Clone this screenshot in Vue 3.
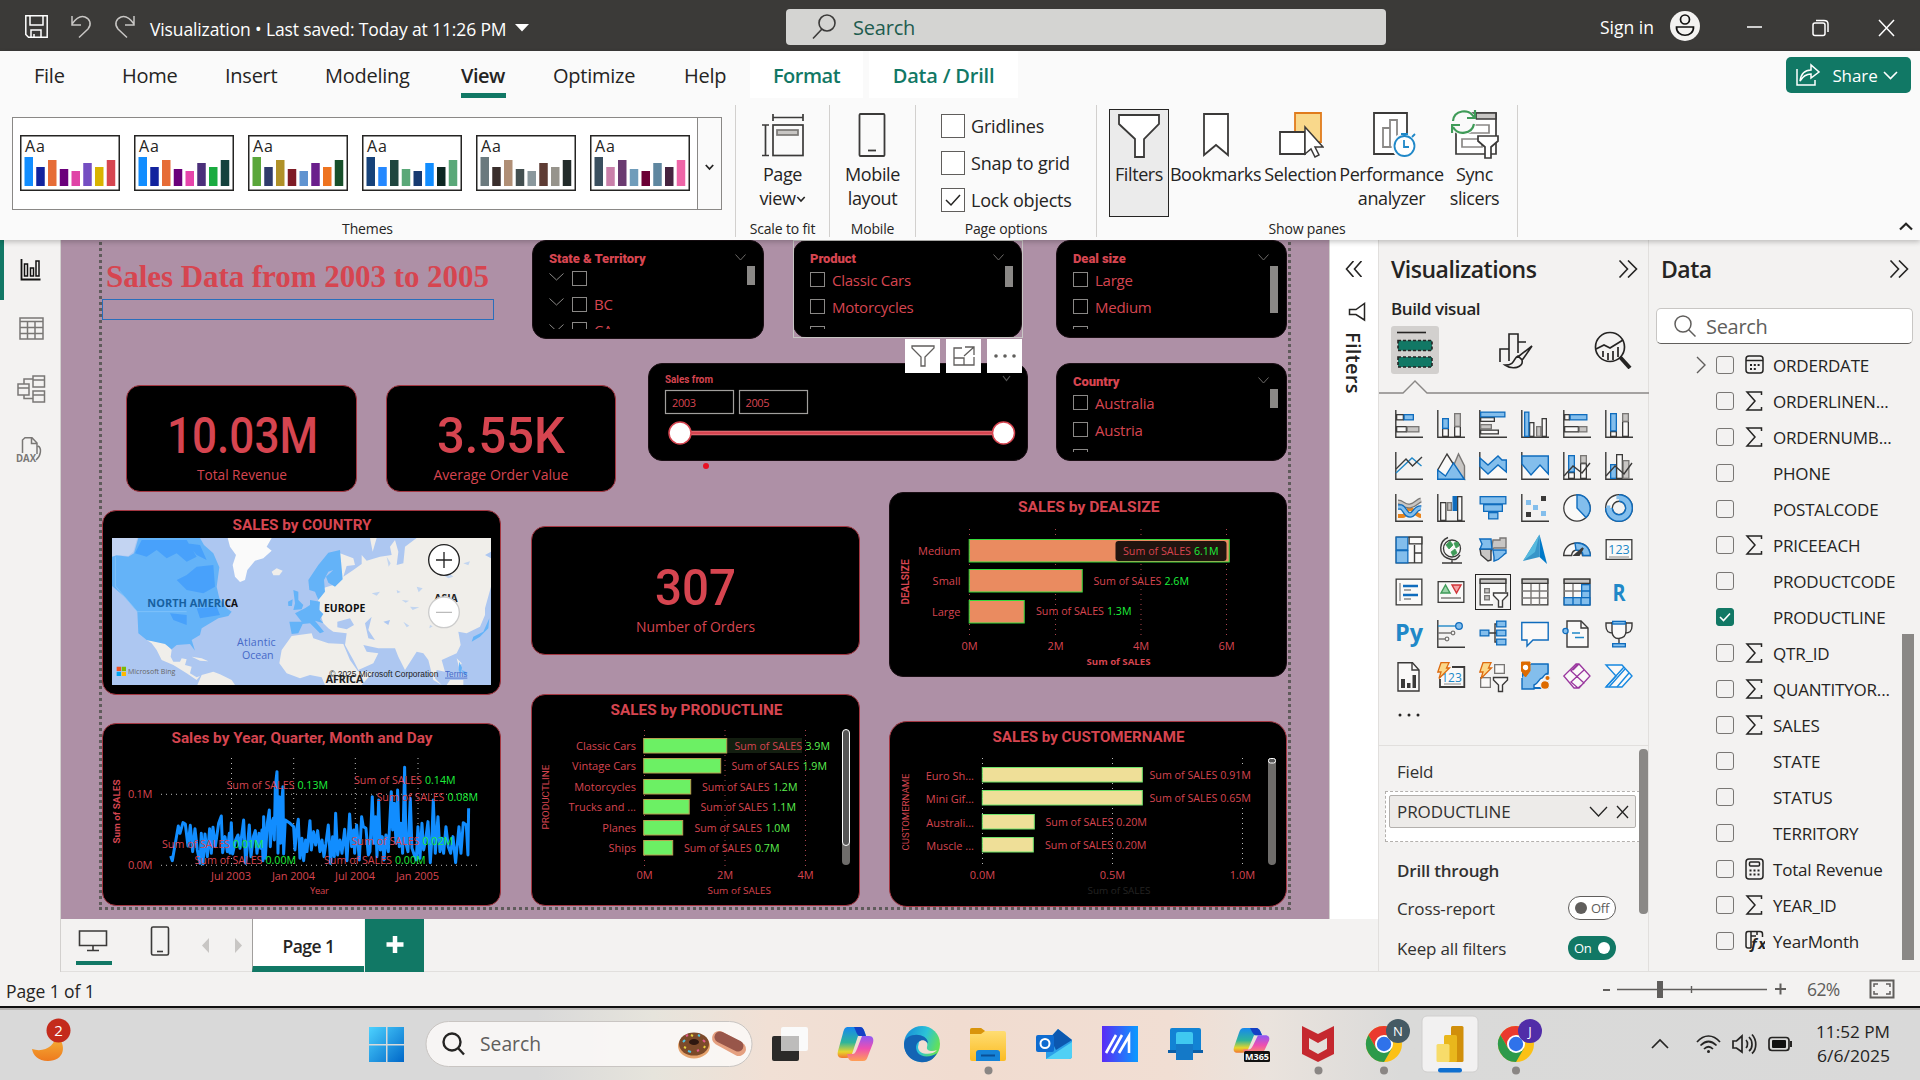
<script setup>
const D = '#3b3a39'
const B = '#83beec'
const BS = '#0f6cbd'
const G = '#c8c6c4'
const GS = '#797775'
const W = '#faf9f8'

const r = (x, y, w, h, f = W, s = D, sw = 1.3) =>
  `<rect x="${x + sw / 2}" y="${y + sw / 2}" width="${w - sw}" height="${h - sw}" fill="${f}" stroke="${s}" stroke-width="${sw}"/>`
const p = (d, s = D, f = 'none', sw = 1.4) =>
  `<path d="${d}" fill="${f}" stroke="${s}" stroke-width="${sw}"/>`
const c = (x, y, rad, f = W, s = D, sw = 1.3) =>
  `<circle cx="${x}" cy="${y}" r="${rad}" fill="${f}" stroke="${s}" stroke-width="${sw}"/>`
const axis = p('M.8 0V27.2H28')
const bolt = p('M4 .7H12L9.5 6H12.5L2 16.5L4 10H.8Z', '#dd6b10', '#fbd889', 1.3)
const funnel = (x, y) => p(`M${x} ${y}h14v2.500l-5 5v6.500h-4v-6.500l-5-5z`, D, W)

const visualIcons = [
  axis + r(1, 4, 8, 6.500) + r(8.500, 4, 10.500, 6.500, B, BS) + r(1, 16, 11, 6.500) + r(11.500, 16, 13, 6.500, G, GS),
  axis + r(5, 18, 7, 9) + r(5, 8, 7, 11, B, BS) + r(17, 16, 7, 11) + r(17, 3, 7, 14, G, GS),
  axis + r(1, 7, 15, 5) + r(1, 1.500, 25.500, 6, B, BS) + r(1, 14, 12, 5.500, G, GS) + r(1, 19.500, 19, 5),
  axis + r(8, 12, 5.500, 15) + r(3, 1.500, 5.500, 25.500, B, BS) + r(15, 16, 5.500, 11, G, GS) + r(20.500, 8, 5.500, 19),
  axis + r(1, 4, 6, 6.500) + r(6.500, 4, 18, 6.500, B, BS) + r(1, 16, 15, 6.500) + r(15.500, 16, 9, 6.500, G, GS),
  axis + r(5, 21, 7, 6) + r(5, 3, 7, 18.500, B, BS) + r(17, 11, 7, 16) + r(17, 3, 7, 9, G, GS),
  axis + p('M1 21L17 6L26.500 14', '#2088c8') + p('M1 17L11 7L17.500 14L27 5'),
  p('M16 15L21.500 2L27.500 14V27Z', GS, G) + p('M.7 18L10 2L17 13L9 25L.7 20Z', D, W) + p('M.7 18L8.500 24L16.500 11L27.300 27.300H.7Z', BS, B),
  p('M1 27V14L10 22L19 13L27 21V27Z', W, W) + axis + p('M1 6L9 13L19 4L23 8H27.300V20L19 13L9 22L1 14.500Z', BS, B),
  p('M1 27V12L10 23L19 13L27 22V27Z', W, W) + axis + p('M1 4H27.300V22L19 13L10 23L1 12Z', BS, B),
  axis + r(5, 20, 7, 7) + r(5, 3, 7, 17.500, B, BS) + r(17, 11, 7, 16) + r(17, 3, 7, 8.500, G, GS) + p('M1 24L10 14L19 21L27 11'),
  axis + r(5, 12, 7, 15, B, BS) + r(11, 2, 7, 25) + r(17.500, 8, 7, 19, G, GS) + p('M1 24L10 14L19 22L27 11'),
  axis + p('M3 22H8C11 22 11 15 15 15S21 22 26 22', '#e8851e', 'none', 4) + p('M3 8C8 8 9 13 15 12S22 7 26 6', GS, 'none', 5) + p('M3 8C8 8 9 13 15 12S22 7 26 6', G, 'none', 2.500) + p('M3 13H6C10 14 10 21 15 21S20 13 26 14', BS, 'none', 5.500) + p('M3 13H6C10 14 10 21 15 21S20 13 26 14', B, 'none', 3),
  axis + r(3, 8, 6.500, 19) + r(10, 8, 5, 9, G, GS) + r(15.500, 2, 5, 15, BS, BS) + r(20, 2, 5.500, 25),
  r(.5, 2, 27, 8.500, B, BS) + r(4, 10, 20, 8, B, BS) + r(9, 18, 10.500, 7.500, B, BS),
  axis + r(5, 6, 5, 5, B, B) + r(12, 11, 5, 5, B, B) + r(20, 17, 5, 5, B, B) + r(20, 2, 5, 5, D) + r(5, 18, 5, 5, D),
  c(14, 14, 13.200) + p('M14 .8A13.200 13.200 0 0 1 23 23.500L14 14Z', BS, B),
  c(14, 14, 10, 'none', D, 8) + c(14, 14, 10, 'none', W, 5.200) + p('M14 4A10 10 0 1 1 4 14', BS, 'none', 8) + p('M14 5.300V4A10 10 0 1 1 4 14H5.300', B, 'none', 5.200),
  r(.5, .5, 27, 27) + r(.5, .5, 13, 14, B, BS) + r(.5, 14, 13, 13.500, B, BS) + r(13.500, .5, 14, 8) + p('M19.500 9V27M19.500 17H27'),
  c(15, 12.500, 8.500, W, D) + p('M9 9L13 5L16 9L12 13ZM17 7L21 6L22 10L19 12ZM14 16L18 13L20 17L16 20Z', '#3f9b58', '#3f9b58', .8) + p('M11 1.500C2 5 1 18 10 22S21 22 23 19M15 23.500V27M5 27H25'),
  p('M14 4H21V2H27V12H15L12 15Z', GS, G) + p('M1 13H12V24L9 25L2 19Z', D, G) + p('M.8 3H12L13 13H1L3 8Z', BS, B) + p('M14 14H27V17C23 19 23 23 15 25V21Z', BS, B),
  '<path d="M18.500-1.500V21L2 25Z" fill="#3795c8"/><path d="M18.500-1.500L26 28L18.500 21Z" fill="#0079c8"/><path d="M18.500-1.500L2 25L14 16Z" fill="#55b9de"/>',
  p('M.7 19.500C1 12 6 7 14 7S27 12 27.300 19.500H19.500C19 16 17 14 14 14S9 16 8.500 19.500Z', D, W) + p('M12 7.200C21 6 27 12 27.300 19.500H20C20 16 18 14 13 14Z', BS, B) + p('M12 19L20 12L16 19Z', D, D, 2),
  r(.5, 3, 27, 21) + '<text x="14" y="17.500" font-size="12.500" text-anchor="middle" fill="#2088c8">123</text>' + p('M4 21H24', '#8a8886', 'none', 1),
  r(.5, .5, 27, 27) + p('M5 5V23M9 12H16M9 21H16', '#8a8886', 'none', 1.300) + p('M8 8H23M8 17H23', BS, 'none', 2.400),
  r(.5, 3, 27, 22) + p('M4 15L8.500 7L13 15Z', '#3f9b58', '#9bd3a8') + p('M15 7H24L19.500 15Z', '#d13438', '#f4a3a6') + p('M4 20H24', GS),
  r(.5, .5, 27, 27) + r(.5, .5, 27, 5.500, G) + r(5, 10, 6, 5.500, G, GS) + r(5, 17, 6, 5.500, G, GS) + '<path d="M14 14H30V30H14Z" fill="#f3f2f1"/>' + funnel(14.500, 15),
  r(.5, .5, 27, 27) + r(.5, .5, 27, 5.500, G) + p('M1 13H27M1 20H27M10 6V27M18.500 6V27', GS),
  r(.5, .5, 27, 27) + r(.5, .5, 27, 5.500, G) + r(18, 6, 9.500, 21.500, B, BS) + r(.5, 19, 27, 8.500, B, BS) + p('M1 13H18M10 6V19', GS) + p('M18 13H27M10 19V27M18 19V27', BS),
  '<text x="14" y="23" font-size="23" font-weight="700" text-anchor="middle" textLength="13" lengthAdjust="spacingAndGlyphs" fill="#2088c8">R</text>',
  '<text x="14" y="21" font-size="24" font-weight="700" text-anchor="middle" textLength="28" lengthAdjust="spacingAndGlyphs" fill="#2088c8">Py</text>',
  axis + p('M1 6H20', '#2088c8') + c(22, 6, 3.300, B, BS) + p('M1 13H15M1 19H9', GS) + c(16, 13, 1.800, W, GS) + c(10, 19, 1.800, W, GS),
  p('M10 13H17M20 4H16V22H20') + r(.5, 9.500, 10, 7, B, BS) + r(17, .5, 10.500, 7, B, BS) + r(17, 9.500, 10.500, 7, B, BS) + r(17, 18.500, 10.500, 7, B, BS),
  p('M.8 2.500H27.200V20H12L6 26V20H.8Z', BS, W),
  p('M4 1H18L25 8V27H4Z', D, W) + p('M18 1V8H25') + p('M9 13H17M12 17.500H21', '#2088c8', 'none', 1.300) + c(2.500, 11, 2.600, B, BS),
  p('M7 3H1V6C1 12 4 13 8 13M21 3H27V6C27 12 24 13 20 13') + p('M7 3H21V11C21 16 18 18 14 18.500S7 16 7 11ZM14 18V24', D, W) + r(7, .7, 14, 4, B, BS) + r(7, 23, 14, 4.500, B, BS),
  p('M3 .8H17.500L24 8V29H3Z', D, W) + p('M17 1V8H24') + '<path d="M6 17H10V26H6ZM12 21H15.500V26H12ZM17.500 13H21V26H17.500Z" fill="#3b3a39"/>',
  p('M15 5H27.300V25H3V17', D, W, 1.800) + '<text x="14.500" y="19.500" font-size="12" text-anchor="middle" fill="#2088c8">123</text>' + p('M7 22H24', '#8a8886', 'none', 1) + bolt,
  r(15, 2, 11, 10, W, GS) + r(1, 15, 11, 11, W, GS) + bolt + funnel(14.500, 15.500),
  r(1, 2, 26.500, 25, W, BS, 2) + p('M10 2H27V11C24 12 23 14 21 16C18 16 18 21 13 23V27H1V16', BS, B) + c(24, 23, 4.500, '#dd6b00', '#f3f2f1') + c(26.500, 16, 2.700, '#dd6b00', '#f3f2f1') + p('M.5 0H9V9L4.500 15L.5 9Z', '#dd6b00', '#dd6b00', 1) + c(4.500, 5.500, 2, '#fff', '#fff'),
  p('M13 2L.8 14L11 26H16L27 14L16 2ZM15 2L8 9L21 21L15 26M21 8L8 20L15 26M16 2L10 8', '#9a379f', W, 1.300),
  p('M1 3H17L27 14L17 25H1L11 14Z', '#1788e0', W) + p('M20 7L4 25M24 11L12 25M1 25L19 5', '#1788e0'),
]

const themes = [
  ['#118dff', '#12239e', '#e66c37', '#6b007b', '#e044a7', '#744ec2', '#d9b300', '#d64550'],
  ['#118dff', '#12239e', '#e66c37', '#6b007b', '#e645ab', '#4b2f7a', '#1aab40', '#15423d'],
  ['#5aa63a', '#2f3b6b', '#b09128', '#7e1b25', '#5f93d0', '#6a1f8c', '#ee7420', '#174f2a'],
  ['#16427a', '#2488ff', '#1f463f', '#5aa878', '#163a70', '#118dff', '#0c2622', '#5aa878'],
  ['#6b7a7e', '#3a2e2c', '#b08f76', '#434f50', '#8a989d', '#5e3c34', '#97948c', '#222b2a'],
  ['#3a4f5f', '#c980aa', '#6a3a70', '#6f9cba', '#6b0035', '#5f87a0', '#46233f', '#ee65a7'],
]
const themeHeights = [29, 19, 26, 17, 15, 23, 19, 26]

const tabs = [
  ['File', 34, 31], ['Home', 57, 56], ['Insert', 47, 52], ['Modeling', 48, 88], ['View', 48, 45], ['Optimize', 47, 84], ['Help', 47, 43],
]

const slicers = [
  { title: 'State & Territory', x: 532, y: 240, w: 232, h: 99, rows: ['', 'BC', 'CA'], tree: true, thumb: 19 },
  { title: 'Product', x: 793, y: 240, w: 229, h: 98, rows: ['Classic Cars', 'Motorcycles', ''], thumb: 21 },
  { title: 'Deal size', x: 1056, y: 240, w: 231, h: 98, rows: ['Large', 'Medium', ''], thumb: 47 },
  { title: 'Country', x: 1056, y: 363, w: 231, h: 98, rows: ['Australia', 'Austria', ''], thumb: 19 },
]
const place = (x, y, w, h) => ({ left: `${x - 61}px`, top: `${y - 240}px`, width: `${w}px`, height: `${h}px` })

const dealBars = [
  { n: 'Medium', y: 539, w: 261, v: '6.1M', ty: 551, tx: 1123 },
  { n: 'Small', y: 569, w: 114, v: '2.6M', ty: 581, tx: 1093.500 },
  { n: 'Large', y: 600, w: 56, v: '1.3M', ty: 611, tx: 1036 },
]
const productBars = [
  { n: 'Classic Cars', y: 738, w: 84, v: '3.9M', tx: 734.500 },
  { n: 'Vintage Cars', y: 758, w: 78, v: '1.9M', tx: 731.500 },
  { n: 'Motorcycles', y: 779, w: 48, v: '1.2M', tx: 702 },
  { n: 'Trucks and ...', y: 799, w: 46.500, v: '1.1M', tx: 700.500 },
  { n: 'Planes', y: 820, w: 40, v: '1.0M', tx: 694.500 },
  { n: 'Ships', y: 840, w: 30, v: '0.7M', tx: 684 },
]
const customerBars = [
  { n: 'Euro Sh...', y: 767, w: 161, v: '0.91M', tx: 1149.500 },
  { n: 'Mini Gif...', y: 790, w: 161, v: '0.65M', tx: 1149.500 },
  { n: 'Australi...', y: 814, w: 53, v: '0.20M', tx: 1045.500 },
  { n: 'Muscle ...', y: 837, w: 52, v: '0.20M', tx: 1045 },
]
const linePoints = '512,1098 517,1112 535,1008 540,1030 549,998 556,1002 564,1068 571,1006 578,1085 585,1016 592,1080 600,1120 604,1030 609,1122 615,1032 622,1100 629,1016 634,1090 639,1012 646,1070 656,1000 664,978 668,1088 675,1040 682,1085 688,1030 690,1090 694,998 698,1092 707,1050 714,1035 720,1075 726,1030 731,990 737,1120 743,1060 748,1005 753,1100 760,1040 766,1022 771,1090 777,1030 782,1075 786,1020 789,1112 791,980 796,1105 802,1000 808,960 811,1070 815,1000 820,985 823,1050 826,890 831,845 834,1090 838,920 842,1060 845,940 849,890 851,1092 856,990 868,998 881,1010 885,1080 890,1020 895,988 900,1105 906,1045 911,1112 917,1050 921,1085 930,992 934,1080 941,1025 947,1065 953,1022 960,1085 966,1050 972,1100 978,1060 985,1005 992,1120 998,1040 1003,1100 1007,970 1013,1095 1020,1050 1026,1090 1034,1018 1041,1112 1049,972 1055,1070 1061,1020 1064,1090 1070,1005 1078,1110 1085,980 1090,1010 1098,1015 1105,1095 1110,1085 1117,920 1122,1060 1127,980 1131,1100 1136,930 1141,1080 1147,1040 1152,1110 1158,1035 1165,1085 1174,905 1178,1020 1183,940 1188,1060 1193,900 1198,1070 1203,1000 1208,1090 1214,832 1218,1060 1224,1085 1231,925 1236,1075 1243,1095 1249,1110 1254,1010 1260,1105 1266,1000 1271,1080 1277,1050 1284,995 1291,1118 1296,1040 1300,930 1306,1090 1314,980 1320,1085 1326,1045 1331,1090 1338,1010 1345,1070 1352,1090 1359,1040 1367,1118 1377,1010 1383,1090 1390,998 1399,1005 1404,1095 1406,955'
const lineLabels = [
  [226.500, 785, '0.13M'], [354, 780, '0.14M'], [376.500, 797, '0.08M'],
  [162, 844, '0.01M'], [351.500, 841, '0.02M'], [194.500, 860, '0.00M'], [324, 860, '0.00M'],
]

const fields = [
  ['ORDERDATE', 'date'], ['ORDERLINEN...', 'sum'], ['ORDERNUMB...', 'sum'], ['PHONE', ''], ['POSTALCODE', ''],
  ['PRICEEACH', 'sum'], ['PRODUCTCODE', ''], ['PRODUCTLINE', '', true], ['QTR_ID', 'sum'], ['QUANTITYOR...', 'sum'],
  ['SALES', 'sum'], ['STATE', ''], ['STATUS', ''], ['TERRITORY', ''], ['Total Revenue', 'calc'], ['YEAR_ID', 'sum'], ['YearMonth', 'fx'],
]
</script>

<template>
  <div class="app">
    <header class="titlebar">
      <svg class="quick" width="120" height="30" viewBox="20 11 120 30" fill="none" stroke="#fff" stroke-width="1.500">
        <path d="M25.800 15.800H47.200V37.200H28.500L25.800 34.500ZM30 16V25H43V16M31 37V30H41V37M34 34V37" />
        <path d="M72 16V25H81M72 24C77 17 81 15.500 85 17C90 19 92 24 88 29L79 37.500" stroke="#c8c6c4" />
        <path d="M134 16V25H125M134 24C129 17 125 15.500 121 17C116 19 114 24 118 29L127 37.500" stroke="#c8c6c4" />
      </svg>
      <span class="doc">Visualization • Last saved: Today at 11:26 PM</span>
      <svg class="caret" width="14" height="8" viewBox="0 0 14 8"><path d="M0 0H14L7 7.500Z" fill="#fff" /></svg>
      <div class="topsearch">
        <svg width="24" height="26" viewBox="0 0 24 26" fill="none" stroke="#3b3a39" stroke-width="1.600"><circle cx="15" cy="9" r="8" /><path d="M10 15L1 24.500" /></svg>
        <span>Search</span>
      </div>
      <span class="signin">Sign in</span>
      <svg class="avatar" width="30" height="30" viewBox="0 0 30 30"><circle cx="15" cy="15" r="15" fill="#f3f2f1" /><g fill="none" stroke="#111" stroke-width="1.700"><circle cx="15" cy="8.500" r="4.500" /><path d="M6.500 16H23.500C24 27 6 27 6.500 16Z" /></g></svg>
      <svg class="winbtns" width="150" height="20" viewBox="0 0 150 20" fill="none" stroke="#fff" stroke-width="1.500">
        <path d="M1 9H16M133 2L148 18M148 2L133 18" />
        <rect x="67" y="5" width="12" height="12.500" rx="2" /><path d="M70 2.500H78C81 2.500 82 4 82 6V14" />
      </svg>
    </header>

    <div class="ribbon">
      <nav class="tabs">
        <span v-for="t in tabs" :key="t[0]" class="tab" :class="{ active: t[0] === 'View' }" :style="{ marginLeft: t[1] + 'px', width: t[2] + 'px' }">{{ t[0] }}</span>
        <span class="ctx format">Format</span>
        <span class="ctx drill">Data / Drill</span>
        <button class="share">
          <svg width="25" height="24" viewBox="0 0 25 24" fill="none" stroke="#fff" stroke-width="1.500"><path d="M1 6V22H19V17" /><path d="M4 18C5 11 9 7 15 7V2L23 9L15 15V11C10 11 7 13 4 18Z" /></svg>
          <span>Share</span>
          <svg width="15" height="9" viewBox="0 0 15 9" fill="none" stroke="#fff" stroke-width="1.600"><path d="M1 1L7.500 7.500L14 1" /></svg>
        </button>
      </nav>
      <div class="groups">
        <div class="group themes">
          <div class="gallery">
            <svg v-for="(t, i) in themes" :key="i" width="100" height="56" viewBox="0 0 100 56">
              <rect x=".75" y=".75" width="98.500" height="54.500" fill="#fff" stroke="#252423" stroke-width="1.500" />
              <text x="5" y="16.500" font-size="16" textLength="20" fill="#252423">Aa</text>
              <rect v-for="(col, k) in t" :key="k" :x="4.500 + k * 11.750" :y="51 - themeHeights[k]" width="8.500" :height="themeHeights[k]" :fill="col" />
            </svg>
            <div class="more"><svg width="9" height="7" viewBox="0 0 9 7" fill="none" stroke="#252423" stroke-width="1.800"><path d="M.8 1L4.500 5L8.200 1" /></svg></div>
          </div>
          <div class="glabel">Themes</div>
        </div>
        <div class="group" style="width: 94px">
          <div class="tool">
            <svg width="44" height="44" viewBox="0 0 44 44" fill="none" stroke="#3b3a39" stroke-width="1.700"><path d="M12 1V8M42 1V8M12 4.500H42M1 12H8M1 42.500H8M4.500 12V42.500" /><rect x="12" y="12" width="30" height="30.500" /><rect x="16" y="17" width="21" height="5" fill="#c8c6c4" stroke="#797775" /></svg>
            <span>Page<br>view<svg class="vchev" width="10" height="7" viewBox="0 0 9 7" fill="none" stroke="#252423" stroke-width="1.600"><path d="M.8 1L4.500 5L8.200 1" /></svg></span>
          </div>
          <div class="glabel">Scale to fit</div>
        </div>
        <div class="group" style="width: 86px">
          <div class="tool">
            <svg width="28" height="44" viewBox="0 0 28 44" fill="none" stroke="#3b3a39" stroke-width="1.800"><rect x="1.500" y="1" width="25" height="42" rx="1" /><path d="M10 37.500H18" /></svg>
            <span>Mobile<br>layout</span>
          </div>
          <div class="glabel">Mobile</div>
        </div>
        <div class="group" style="width: 181px">
          <div class="options">
            <label><i></i>Gridlines</label>
            <label><i></i>Snap to grid</label>
            <label><i><svg width="20" height="20" viewBox="0 0 20 20" fill="none" stroke="#252423" stroke-width="1.500"><path d="M3 10L8 15L17 5" /></svg></i>Lock objects</label>
          </div>
          <div class="glabel">Page options</div>
        </div>
        <div class="group" style="width: 421px">
          <div class="tools">
            <div class="tool on" style="width: 60px">
              <svg width="44" height="44" viewBox="0 0 44 44" fill="#fff" stroke="#3b3a39" stroke-width="1.800"><path d="M2 1H42V10L27 25V43H18V25L2 10Z" /></svg><span>Filters</span>
            </div>
            <div class="tool" style="width: 93px">
              <svg width="28" height="44" viewBox="0 0 28 44" fill="#fff" stroke="#3b3a39" stroke-width="1.800"><path d="M2 1H26V42L14 32L2 42Z" /></svg><span>Bookmarks</span>
            </div>
            <div class="tool" style="width: 77px">
              <svg width="46" height="46" viewBox="0 0 46 46" fill="#fff" stroke="#3b3a39" stroke-width="1.800"><path d="M17 1H43V30H17Z" fill="#f9d88b" stroke="#e07b1c" /><path d="M2 20H27V42H2Z" /><path d="M27 15V42L33 37L37 45L41 43L37 35H45Z" stroke-width="1.500" /></svg><span>Selection</span>
            </div>
            <div class="tool" style="width: 105px">
              <svg class="shift" width="44" height="46" viewBox="0 0 44 46" fill="#fff" stroke="#3b3a39" stroke-width="1.800"><path d="M1 1H34V42H1Z" /><path d="M10 16H17V35H10ZM17 8H24V35H17Z" stroke="#8a8886" /><circle cx="31.500" cy="34" r="13" stroke="none" fill="#fafafa" /><circle cx="31.500" cy="34" r="10" stroke="#2088c8" /><path d="M31 28V35H36M28 22H35M31.500 22V24M39 25L42 22" stroke="#2088c8" fill="none" /></svg><span>Performance<br>analyzer</span>
            </div>
            <div class="tool" style="width: 61px">
              <svg class="tall" width="48" height="50" viewBox="0 0 48 50" fill="#fff" stroke="#3b3a39" stroke-width="1.700"><path d="M5 4H45V45H5Z" /><path d="M25 4H45V10H25Z" fill="#c8c6c4" /><path d="M18 16H38V24H18ZM11 30H31V38H11Z" stroke="#8a8886" /><circle cx="12" cy="13" r="13" fill="#fafafa" stroke="none" /><path d="M2 12C3 1 18-1 23 8M24 1V9H16M23 15C21 25 7 27 2 18M1 24V16H9" fill="none" stroke="#3f9b58" stroke-width="2.200" /><path d="M27 27H47V32L40 38V49H34V38L27 32Z" /></svg><span>Sync<br>slicers</span>
            </div>
          </div>
          <div class="glabel">Show panes</div>
        </div>
        <svg class="collapse" width="14" height="9" viewBox="0 0 14 9" fill="none" stroke="#252423" stroke-width="2.200"><path d="M1 7.500L7 1.800L13 7.500" /></svg>
      </div>
    </div>

    <main class="work">
      <aside class="rail">
        <svg width="61" height="240" viewBox="0 240 61 240" fill="none" stroke="#797775" stroke-width="1.500">
          <path d="M0 240H4V300H0Z" fill="#117865" stroke="none" />
          <path d="M21.500 259V279.500H40.500" stroke="#111" stroke-width="1.800" /><path d="M24.500 264H27.500V276H24.500ZM30.500 268H33.500V276H30.500ZM36 261H39V276H36Z" stroke="#111" />
          <path d="M20 318H43V339H20ZM20 321.500H43M20 327.500H43M20 333.500H43M27.500 321V339M35 321V339" />
          <path d="M33 376H44.500V387H33ZM33 380H44.500M33 391H44.500V402H33ZM33 395H44.500M18 384H29V395H18ZM18 388H29M24 384V379H33M24 395V398.500H33" />
          <path d="M22.500 453V440L25 437.800H32L37 443V454M31.500 438V443.500H37M38 446C42 448 41 456 36 460" />
          <text x="16" y="462" font-size="10.500" font-weight="700" fill="#797775" stroke="none" textLength="20" lengthAdjust="spacingAndGlyphs">DAX</text>
        </svg>
      </aside>

      <div class="center">
        <div class="canvas">
          <div class="pageframe"></div>
          <h1 class="heading">Sales Data from 2003 to 2005</h1>
          <div class="textbox"></div>

          <section v-for="s in slicers" :key="s.title" class="visual slicer" :class="{ tree: s.tree }" :style="place(s.x, s.y, s.w, s.h)">
            <div class="shead"><b>{{ s.title }}</b><svg width="11" height="7" viewBox="0 0 11 7" fill="none" stroke="#6b6967"><path d="M.5 .5L5.500 6L10.500 .5" /></svg></div>
            <div class="sbody">
              <div class="srows">
                <div v-for="(o, i) in s.rows" :key="i" class="srow">
                  <svg v-if="s.tree" width="15" height="8" viewBox="0 0 15 8" fill="none" stroke="#8a8886"><path d="M.5 .5L7.500 7L14.500 .5" /></svg>
                  <i></i><span>{{ o }}</span>
                </div>
              </div>
              <div class="sthumb" :style="{ height: s.thumb + 'px' }"></div>
            </div>
          </section>
          <div class="selframe"></div>

          <section class="visual" :style="place(648, 363, 380, 98)">
            <svg width="380" height="98" viewBox="648 363 380 98">
              <text class="din" x="665" y="382.500" font-size="11" font-weight="700" textLength="48" lengthAdjust="spacingAndGlyphs">Sales from</text>
              <g fill="none" stroke="#a19f9d" stroke-width="1.200"><rect x="665.500" y="390.500" width="68" height="23" /><rect x="739.500" y="390.500" width="68" height="23" /><path d="M1003 376L1006.500 380.500L1010 376" stroke="#555" /></g>
              <text x="672" y="407" font-size="11" textLength="24">2003</text><text x="745.500" y="407" font-size="11" textLength="24">2005</text>
              <path d="M680 433H1003" stroke="#e8868d" stroke-width="4.500" /><path d="M680 433H1003" stroke="#d64550" stroke-width="3" />
              <circle cx="680" cy="433" r="11" fill="#fff" stroke="#d64550" stroke-width="1.500" /><circle cx="1003.500" cy="433" r="11" fill="#fff" stroke="#d64550" stroke-width="1.500" />
            </svg>
          </section>
          <div class="vtools">
            <span><svg width="26" height="26" viewBox="0 0 26 26" fill="none" stroke="#605e5c" stroke-width="1.300"><path d="M2 3H24V5L15 14V23H11V14L2 5Z" /></svg></span>
            <span><svg width="26" height="26" viewBox="0 0 26 26" fill="none" stroke="#605e5c" stroke-width="1.300"><path d="M11 5H3V22H23V14M3 15H13V22M14 4H23V12M23 4L13 13" /></svg></span>
            <span><svg width="26" height="26" viewBox="0 0 26 26" fill="#605e5c"><circle cx="4" cy="13" r="1.800" /><circle cx="13" cy="13" r="1.800" /><circle cx="22" cy="13" r="1.800" /></svg></span>
          </div>
          <div class="reddot"></div>

          <section class="visual red" :style="place(126, 385, 231, 107)">
            <svg width="231" height="107" viewBox="126 385 231 107"><text class="din big" x="167" y="453" textLength="151" lengthAdjust="spacingAndGlyphs">10.03M</text><text x="197" y="480" font-size="15" textLength="90" lengthAdjust="spacingAndGlyphs">Total Revenue</text></svg>
          </section>
          <section class="visual red" :style="place(386, 385, 230, 107)">
            <svg width="230" height="107" viewBox="386 385 230 107"><text class="din big" x="437" y="453" textLength="128" lengthAdjust="spacingAndGlyphs">3.55K</text><text x="433.500" y="480" font-size="15" textLength="135" lengthAdjust="spacingAndGlyphs">Average Order Value</text></svg>
          </section>
          <section class="visual red" :style="place(531, 526, 329, 129)">
            <svg width="329" height="129" viewBox="531 526 329 129"><text class="din big" x="655" y="605" textLength="81" lengthAdjust="spacingAndGlyphs">307</text><text x="636" y="632" font-size="15" textLength="119" lengthAdjust="spacingAndGlyphs">Number of Orders</text></svg>
          </section>

          <section class="visual red" :style="place(102, 510, 399, 185)">
            <svg width="399" height="185" viewBox="102 510 399 185">
              <text class="din t" x="232.500" y="530" textLength="139" lengthAdjust="spacingAndGlyphs">SALES by COUNTRY</text>
              <svg x="112" y="538" width="379" height="147" viewBox="336 144 1137 441">
                <rect x="336" y="144" width="1137" height="441" fill="#adc7f1" />
                <g fill="#f0eeea">
                  <path d="M683 144H815L800 170L815 182L790 205L765 212L742 240L735 270L720 276L705 260L698 225L708 195L690 170Z" fill="#fafafa" />
                  <path d="M815 245L830 235L848 242L838 256L820 256Z" />
                  <path d="M336 144H412L400 185L385 198L360 196L336 205Z" fill="#c3d4f2" />
                  <path d="M440 450L495 458L515 480L512 500L520 515L540 515L545 505L560 508L555 525L575 530L570 550L590 562L600 558L590 570L560 550L520 525L485 510L470 480L455 460Z" />
                  <path d="M592 585L605 555L640 545L660 553L695 570L705 585ZM575 500L605 505L625 514L600 512Z" />
                  <path d="M1020 190L1060 205L1065 225L1040 228L1030 260L1060 240L1085 222L1085 195L1100 212L1140 200L1175 195L1170 170L1185 150L1195 185L1190 225L1210 220L1215 170L1250 144H1473V185L1455 195L1473 205V290L1455 355L1455 375L1440 410L1400 430L1375 425L1382 465L1370 490L1325 510L1335 545L1310 540L1305 565L1325 585L1300 570L1285 510L1270 490L1250 485L1215 540L1195 500L1185 475L1135 475L1090 465L1100 485L1135 490L1120 520L1075 540L1060 510L1035 465L1040 430L1000 425L985 415L970 400L960 370L950 300L1000 285Z" />
                  <path d="M875 438L935 430L940 445L985 460L1030 462L1050 510L1075 545L1120 545L1085 585H975L965 562L930 555L900 565L860 550L838 520L845 480Z" />
                  <path d="M1110 144H1130L1118 185ZM1340 585L1350 570H1390V585ZM1370 505L1385 520L1378 535Z" />
                </g>
                <path d="M1012 395L1050 385L1062 405L1040 418L1012 412ZM1095 400L1115 380L1105 420L1125 450L1105 445ZM1150 395L1170 390L1165 405Z" fill="#adc7f1" />
                <path d="M1190 300l12 6-10 4ZM1250 290l18 5-12 12ZM1320 250l20-8 20 18-15 5ZM1160 200l12 20-6 10ZM1210 395l18 12-8 5ZM1115 310l25-5-10 12ZM1230 350l28 2-20 8ZM1390 220l20-6-5 12ZM1290 405l8 4-10 6ZM1205 330l22 2-10 6Z" fill="#c2d5f0" />
                <g fill="#64b3f8">
                  <path d="M336 200L350 196L385 200L402 190L415 144H600L612 165L640 190L658 232L650 290L658 325L680 355L695 365L685 378L655 385L625 403L605 415L600 435L575 450L585 482L570 462L530 465L515 478L495 462L440 450L415 430L412 365L375 322L336 288Z" />
                  <path d="M925 270L955 225L985 188L1020 180L1028 268L1005 290L985 278L978 260L1000 240L985 245L972 270L975 305L955 330L945 305L928 300Z" />
                  <path d="M880 300L895 305L895 330L910 345L905 358L880 360L885 340ZM864 335L878 328L876 348L865 348Z" />
                  <path d="M868 395L905 395L885 370L915 355L930 345L930 330L960 335L958 360L970 372L960 388L970 400L945 392L972 425L960 430L930 400L908 402L895 430L875 432Z" />
                  <path d="M1468 385L1465 415L1440 440L1415 455L1420 440L1450 425ZM1378 515l8 18-4 18-6-10ZM1385 540l18 8-8 10Z" />
                </g>
                <path d="M405 190L425 150H560L590 200L560 215L530 190L500 205L470 180L440 200ZM530 270L560 255L590 230L640 225L645 290L610 310L560 300ZM560 160L600 165L620 210L590 195ZM510 370L560 375L560 405L520 390ZM590 355L650 350L660 375L600 385Z" fill="#48a1fb" />
                <path d="M346 200V288L412 365H560" fill="none" stroke="#8cc8fb" stroke-width="2" />
                <g font-size="31" font-weight="700">
                  <text x="442" y="350" style="fill: #17609f" textLength="232" lengthAdjust="spacingAndGlyphs">NORTH AMERI</text><text x="674" y="350" style="fill: #111" textLength="40" lengthAdjust="spacingAndGlyphs">CA</text>
                  <text x="972" y="366" style="fill: #111" textLength="124" lengthAdjust="spacingAndGlyphs">EUROPE</text><text x="1303" y="337" style="fill: #222" textLength="70" lengthAdjust="spacingAndGlyphs">ASIA</text>
                  <text x="977" y="579" style="fill: #222" textLength="113" lengthAdjust="spacingAndGlyphs">AFRICA</text>
                </g>
                <g font-size="32" font-weight="500"><text x="711" y="469" style="fill: #4669c8" textLength="116">Atlantic</text><text x="726" y="506" style="fill: #4669c8" textLength="95">Ocean</text></g>
                <path d="M350 530h13v13h-13Z" fill="#f25022" /><path d="M365 530h13v13h-13Z" fill="#7fba00" /><path d="M350 545h13v13h-13Z" fill="#00a4ef" /><path d="M365 545h13v13h-13Z" fill="#ffb900" />
                <text x="384" y="552" font-size="24" style="fill: #666" textLength="142" lengthAdjust="spacingAndGlyphs">Microsoft Bing</text>
                <text x="988" y="560" font-size="25" style="fill: #222; font-family: 'Liberation Sans'" textLength="327" lengthAdjust="spacingAndGlyphs">© 2025 Microsoft Corporation</text>
                <text x="1335" y="560" font-size="25" style="fill: #4669c8; font-family: 'Liberation Sans'; text-decoration: underline" textLength="67" lengthAdjust="spacingAndGlyphs">Terms</text>
                <circle cx="1332" cy="210" r="46" fill="#fff" stroke="#222" stroke-width="4" /><path d="M1308 210H1356M1332 186V234" stroke="#222" stroke-width="4" />
                <circle cx="1332" cy="367" r="46" fill="#fff" stroke="#ccc" stroke-width="4" /><path d="M1308 367H1356" stroke="#bbb" stroke-width="4" />
              </svg>
            </svg>
          </section>

          <section class="visual red" :style="place(102, 723, 399, 183)">
            <svg width="399" height="183" viewBox="102 723 399 183">
              <text class="din t" x="171.500" y="743" textLength="261" lengthAdjust="spacingAndGlyphs">Sales by Year, Quarter, Month and Day</text>
              <path d="M231.500 758V865M293.700 758V865M355.300 758V865M418 758V865M161 794.300H478M161 865.300H478" stroke="#bbb" stroke-dasharray="1 4" fill="none" />
              <polyline :points="linePoints" transform="translate(0 490) scale(.3333)" fill="none" stroke="#118dff" stroke-width="9" stroke-linejoin="round" />
              <text class="din" transform="translate(120 843.500) rotate(-90)" font-size="9.500" font-weight="700" textLength="64" lengthAdjust="spacingAndGlyphs">Sum of SALES</text>
              <text x="128" y="798" font-size="11" textLength="24.500">0.1M</text><text x="128" y="869" font-size="11" textLength="24.500">0.0M</text>
              <g v-for="(l, i) in lineLabels" :key="i" font-size="11"><text :x="l[0]" :y="l[1] + 4" textLength="68" lengthAdjust="spacingAndGlyphs">{{ 'Sum of SALES' }}</text><text class="green" :x="l[0] + 71" :y="l[1] + 4" textLength="30.500" lengthAdjust="spacingAndGlyphs">{{ l[2] }}</text></g>
              <g font-size="11"><text x="211" y="880" textLength="40">Jul 2003</text><text x="272" y="880" textLength="43">Jan 2004</text><text x="335" y="880" textLength="40">Jul 2004</text><text x="396" y="880" textLength="43">Jan 2005</text></g>
              <text x="310" y="894" font-size="9.500" textLength="19">Year</text>
            </svg>
          </section>

          <section class="visual red" :style="place(531, 694, 329, 212)">
            <svg width="329" height="212" viewBox="531 694 329 212">
              <text class="din t" x="610.500" y="715" textLength="172" lengthAdjust="spacingAndGlyphs">SALES by PRODUCTLINE</text>
              <path d="M644.500 730V866M725 730V866M805.500 730V866" stroke="#a8434b" stroke-dasharray="1 4" fill="none" />
              <text class="din" transform="translate(549 829.500) rotate(-90)" font-size="9.500" textLength="65" lengthAdjust="spacingAndGlyphs">PRODUCTLINE</text>
              <rect x="727" y="738" width="75" height="15" fill="#131e10" />
              <g v-for="b in productBars" :key="b.n" font-size="11">
                <text x="636" :y="b.y + 12" text-anchor="end">{{ b.n }}</text>
                <rect :x="643.700" :y="b.y + .5" :width="b.w - 1" height="14.500" fill="#6cf064" stroke="#b8a050" />
                <text :x="b.tx" :y="b.y + 11.500" textLength="67.500" lengthAdjust="spacingAndGlyphs">Sum of SALES</text>
                <text class="lime" :x="b.tx + 71" :y="b.y + 11.500" textLength="24.500" lengthAdjust="spacingAndGlyphs">{{ b.v }}</text>
              </g>
              <g font-size="11" text-anchor="middle"><text x="644.500" y="879">0M</text><text x="725" y="879">2M</text><text x="805.500" y="879">4M</text></g>
              <text x="707.500" y="894" font-size="9.500" textLength="63.500" lengthAdjust="spacingAndGlyphs">Sum of SALES</text>
              <rect x="842" y="730" width="8" height="135" rx="4" fill="#6e6c6a" /><rect x="842.500" y="729.500" width="7" height="116" rx="3.500" fill="#555" stroke="#fff" />
            </svg>
          </section>

          <section class="visual" :style="place(889, 492, 398, 185)">
            <svg width="398" height="185" viewBox="889 492 398 185">
              <text class="din t" x="1018" y="512" textLength="141.500" lengthAdjust="spacingAndGlyphs">SALES by DEALSIZE</text>
              <path d="M969.500 529V638M1055.500 529V638M1141 529V638M1226.500 529V638" stroke="#a8434b" stroke-dasharray="1 4" fill="none" />
              <text class="din" transform="translate(909 604.500) rotate(-90)" font-size="10" font-weight="700" textLength="45" lengthAdjust="spacingAndGlyphs">DEALSIZE</text>
              <g v-for="(b, i) in dealBars" :key="b.n" font-size="11">
                <text x="960.500" :y="b.y + 16" text-anchor="end">{{ b.n }}</text>
                <rect x="969.200" :y="b.y + .5" :width="b.w - 1" height="22.500" fill="#ea8b60" stroke="#35dc3c" />
                <rect v-if="i === 0" x="1115.500" y="541" width="111" height="20" rx="3" fill="#20140f" />
                <text :x="b.tx" :y="b.ty + 4" textLength="68" lengthAdjust="spacingAndGlyphs">Sum of SALES</text>
                <text class="green" :x="b.tx + 71" :y="b.ty + 4" textLength="24.500" lengthAdjust="spacingAndGlyphs">{{ b.v }}</text>
              </g>
              <g font-size="11" text-anchor="middle"><text x="969.500" y="650">0M</text><text x="1055.500" y="650">2M</text><text x="1141" y="650">4M</text><text x="1226.500" y="650">6M</text></g>
              <text x="1086.500" y="665" font-size="9.500" font-weight="700" textLength="64" lengthAdjust="spacingAndGlyphs">Sum of SALES</text>
            </svg>
          </section>

          <section class="visual red round" :style="place(889, 721, 398, 186)">
            <svg width="398" height="186" viewBox="889 721 398 186">
              <text class="din t" x="992.500" y="742" textLength="192" lengthAdjust="spacingAndGlyphs">SALES by CUSTOMERNAME</text>
              <path d="M982.500 758V866M1112.500 758V866M1242.500 758V866" stroke="#bbb" stroke-dasharray="1 4" fill="none" />
              <text class="din" transform="translate(909 850.500) rotate(-90)" font-size="9.500" textLength="77" lengthAdjust="spacingAndGlyphs">CUSTOMERNAME</text>
              <rect x="1147" y="765" width="106" height="43" fill="#000" />
              <g v-for="b in customerBars" :key="b.n" font-size="11">
                <text x="974" :y="b.y + 13" text-anchor="end">{{ b.n }}</text>
                <rect x="982.300" :y="b.y + .5" :width="b.w - 1" height="14.500" fill="#efdf98" stroke="#6fe36b" />
                <text :x="b.tx" :y="b.y + 12" textLength="101.500" lengthAdjust="spacingAndGlyphs">Sum of SALES {{ b.v }}</text>
              </g>
              <g font-size="11" text-anchor="middle"><text x="982.500" y="879">0.0M</text><text x="1112.500" y="879">0.5M</text><text x="1242.500" y="879">1.0M</text></g>
              <text x="1087.500" y="894" font-size="9.500" style="fill: #252423" textLength="63" lengthAdjust="spacingAndGlyphs">Sum of SALES</text>
              <rect x="1268" y="758" width="8" height="107" rx="4" fill="#6e6c6a" /><rect x="1268.500" y="758.500" width="7" height="4.500" rx="2" fill="#555" stroke="#fff" />
            </svg>
          </section>
        </div>

        <div class="filters">
          <svg width="18" height="16" viewBox="0 0 18 16" fill="none" stroke="#252423" stroke-width="1.600"><path d="M8.500 0L1.500 8L8.500 16M16.500 0L9.500 8L16.500 16" /></svg>
          <svg class="ff" width="18" height="20" viewBox="0 0 18 20" fill="none" stroke="#252423" stroke-width="1.500"><path d="M16.500 1.500V18L8 12.500H1.500V7.500H8Z" /></svg>
          <span>Filters</span>
        </div>

        <div class="pagebar">
          <svg class="layouts" width="190" height="53" viewBox="62 919 190 53" fill="none" stroke="#3b3a39" stroke-width="1.600">
            <path d="M79.500 931H106.500V945.500H79.500ZM93 946V950M87 950.500H99" /><path d="M76 961H112V965H76Z" fill="#117865" stroke="none" />
            <rect x="151.500" y="927" width="17" height="28" rx="1.500" /><path d="M157 951.500H163" />
            <path d="M209 938V953L202 945.500ZM235 938V953L242 945.500Z" fill="#c8c6c4" stroke="none" />
          </svg>
          <div class="page">Page 1</div>
          <div class="add"><svg width="18" height="17" viewBox="0 0 18 17"><path d="M9 0V17M.5 8.500H17.500" stroke="#fff" stroke-width="4.500" /></svg></div>
        </div>
      </div>

      <aside class="vis">
        <div class="phead"><h2>Visualizations</h2><svg width="20" height="18" viewBox="0 0 20 18" fill="none" stroke="#252423" stroke-width="1.600"><path d="M1.500 .5L9.500 9L1.500 17.500M10 .5L18.500 9L10 17.500" /></svg></div>
        <h3>Build visual</h3>
        <div class="modes">
          <svg width="48" height="48" viewBox="1391 326 48 48"><rect x="1391" y="326" width="48" height="48" rx="3" fill="#d2d0ce" /><path d="M1397 332.500H1426" stroke="#252423" stroke-width="1.600" /><g fill="#117865" stroke="#252423" stroke-width="1.600" stroke-dasharray="3 2"><rect x="1398" y="340.500" width="34" height="10" /><rect x="1398" y="357" width="34" height="10" /></g></svg>
          <svg width="36" height="38" viewBox="0 0 36 38" fill="none" stroke="#252423" stroke-width="1.600"><path d="M2 31V18H11M11 30V3H20V22M20 11H28M20 18V12" /><path d="M34 15L21 25L19 30L25 28Z" fill="#f3f2f1" /><path d="M20 25C15 27 18 34 7 34C14 39 26 37 24 29Z" fill="#f3f2f1" /></svg>
          <svg width="38" height="38" viewBox="0 0 38 38" fill="none" stroke="#252423" stroke-width="1.700"><circle cx="16" cy="16" r="14.500" /><path d="M2 18L10 14L16 17L29 9M9 20V26M14 22V29M19 20V29M24 16V26" /><path d="M26 26L36 37" stroke-width="4" /></svg>
        </div>
        <svg class="notch" width="270" height="14" viewBox="0 0 270 14" fill="none" stroke="#8a8886" stroke-width="1.400"><path d="M0 13H24L36 1L48 13H270" /></svg>
        <div class="icons">
          <div v-for="(ic, i) in visualIcons" :key="i" class="ico" :class="{ sel: i === 26 }"><svg width="28" height="28" viewBox="0 0 28 28" v-html="ic" /></div>
        </div>
        <svg class="dots" width="24" height="4" viewBox="0 0 24 4" fill="#252423"><circle cx="2" cy="2" r="1.500" /><circle cx="11" cy="2" r="1.500" /><circle cx="20" cy="2" r="1.500" /></svg>
        <div class="wells">
          <div class="field">Field</div>
          <div class="well"><div class="pill"><span>PRODUCTLINE</span>
            <svg width="40" height="16" viewBox="0 0 40 16" fill="none" stroke="#252423" stroke-width="1.300"><path d="M1 3L9.500 12L18 3M28 2L39 14M39 2L28 14" /></svg></div></div>
          <div class="drillt">Drill through</div>
          <div class="trow cr"><span>Cross-report</span><em class="off"><i></i>Off</em></div>
          <div class="trow kf"><span>Keep all filters</span><em class="onn">On<i></i></em></div>
          <div class="vscroll"></div>
        </div>
      </aside>

      <aside class="data">
        <div class="phead"><h2>Data</h2><svg width="20" height="18" viewBox="0 0 20 18" fill="none" stroke="#252423" stroke-width="1.600"><path d="M1.500 .5L9.500 9L1.500 17.500M10 .5L18.500 9L10 17.500" /></svg></div>
        <div class="dsearch"><svg width="22" height="22" viewBox="0 0 22 22" fill="none" stroke="#605e5c" stroke-width="1.500"><circle cx="9" cy="9" r="8" /><path d="M14.500 14.500L21.500 21.500" /></svg><span>Search</span></div>
        <ul>
          <li v-for="f in fields" :key="f[0]">
            <svg class="exp" width="10" height="18" viewBox="0 0 10 18" fill="none" stroke="#605e5c" stroke-width="1.400"><path v-if="f[1] === 'date'" d="M1 1L9 9L1 17" /></svg>
            <i :class="{ checked: f[2] }"><svg v-if="f[2]" width="16" height="16" viewBox="0 0 16 16" fill="none" stroke="#fff" stroke-width="1.600"><path d="M3 8L6.500 11.500L13 4.500" /></svg></i>
            <svg class="fi" width="20" height="22" viewBox="0 0 20 22" fill="none" stroke="#252423" stroke-width="1.500">
              <g v-if="f[1] === 'date'"><rect x="1" y="2" width="17" height="17" rx="3" /><path d="M1 6.500H18" /><path d="M5 11H15M5 15H12" stroke-dasharray="2 1.800" stroke-width="2" /></g>
              <path v-if="f[1] === 'sum'" d="M16.500 5V2H2L10 11L2 20H16.500V17" />
              <g v-if="f[1] === 'calc'"><rect x="1" y="1" width="17" height="20" rx="3" /><rect x="4.500" y="4" width="10" height="4" rx="1" /><path d="M4.500 12.500H15M4.500 16.500H15" stroke-dasharray="2 2" stroke-width="2" /></g>
              <g v-if="f[1] === 'fx'"><path d="M6 18H3C1.500 18 1 17 1 16V4C1 2 2 1.500 3 1.500H15C17 1.500 17.500 3 17.500 4V7M6 1.500V18M6 6H11M12 1.500V5" /><text x="6" y="19" font-size="15" font-style="italic" font-weight="700" stroke="none" fill="#252423" textLength="15">fx</text></g>
            </svg>
            <span>{{ f[0] }}</span>
          </li>
        </ul>
        <div class="dscroll"></div>
      </aside>
    </main>

    <div class="status">
      <span class="pcount">Page 1 of 1</span>
      <svg width="190" height="20" viewBox="1600 980 190 20" fill="none" stroke="#605e5c" stroke-width="1.400"><path d="M1602 991H1609M1774 990H1785M1779.500 984.500V995.500" stroke-width="2" /><path d="M1616 990.500H1766M1690.500 987V994" /><path d="M1659 982V999" stroke-width="6" /></svg>
      <span class="pct">62%</span>
      <svg width="26" height="20" viewBox="0 0 26 20" fill="none" stroke="#605e5c" stroke-width="2"><path d="M1.500 1.500H24.500V18.500H1.500Z" /><path d="M5 8V5H9M17 5H21V8M21 12V15H17M9 15H5V12" stroke-width="1.500" /></svg>
    </div>

    <footer class="taskbar">
      <svg width="1920" height="72" viewBox="0 1008 1920 72">
        <defs>
          <linearGradient id="win" x2="1" y2="1"><stop stop-color="#4cd2ff" /><stop offset="1" stop-color="#0067c8" /></linearGradient>
          <linearGradient id="moon" x2="0" y2="1"><stop stop-color="#f5b83a" /><stop offset="1" stop-color="#ee7a1e" /></linearGradient>
          <linearGradient id="cop1" x2="0" y2="1"><stop stop-color="#1687f0" /><stop offset=".5" stop-color="#2fb59a" /><stop offset=".8" stop-color="#e8d52c" /><stop offset="1" stop-color="#f2742f" /></linearGradient>
          <linearGradient id="cop2" x2="0" y2="1"><stop stop-color="#8e58f5" /><stop offset=".5" stop-color="#ee4fb0" /><stop offset="1" stop-color="#ff9f55" /></linearGradient>
          <linearGradient id="edge" x2="1" y2=".4"><stop stop-color="#1585d8" /><stop offset=".6" stop-color="#2bc3d8" /><stop offset="1" stop-color="#62e05c" /></linearGradient>
          <linearGradient id="asus" x2="1" y2="0"><stop stop-color="#5a2bf5" /><stop offset="1" stop-color="#0a9bff" /></linearGradient>
          <linearGradient id="fold" x2="0" y2="1"><stop stop-color="#ffe07a" /><stop offset="1" stop-color="#fbbc24" /></linearGradient>
          <g id="copilot"><path d="M10 0H22C25 0 26 3 27 6L28 9H20L14 27C13 30 11 31 8 31H4C0 31-1 28 0 24L5 6C6 2 7 0 10 0Z" fill="url(#cop1)" /><path d="M16 0H22C25 0 26 3 27 6L28 9H22C19 9 18 4 16 0Z" fill="#1540c4" /><path d="M24 9H31C35 9 36 12 35 16L30 29C29 32 28 34 25 34H14C11 34 10 31 9 27L15 27C17 27 18 24 19 22Z" fill="url(#cop2)" /></g>
          <g id="chrome"><circle r="18" fill="#fbc116" /><path d="M-15.600-9A18 18 0 0 1 15.600-9H0L-7.800 4.500Z" fill="#ea3a2e" /><path d="M-15.600-9A18 18 0 0 0 0 18L7.800 4.500L-7.800 4.500Z" fill="#2c9a4b" /><circle r="9" fill="#fff" /><circle r="7.200" fill="#2f72ea" /></g>
        </defs>
        <path d="M56 1034C68 1046 64 1061 48 1061C38 1061 33 1055 32 1049C44 1053 56 1046 56 1034Z" fill="url(#moon)" />
        <circle cx="58.500" cy="1030.500" r="12" fill="#c42b1c" /><text x="58.500" y="1036" font-size="15" text-anchor="middle" fill="#fff">2</text>
        <path d="M369 1027H386V1044H369ZM387.500 1027H404V1044H387.500ZM369 1045.500H386V1062H369ZM387.500 1045.500H404V1062H387.500Z" fill="url(#win)" />
        <rect x="426" y="1021.500" width="326" height="45" rx="22.500" fill="#fbf9f8" fill-opacity=".85" stroke="#c9c5c2" />
        <g fill="none" stroke="#252423" stroke-width="2.400"><circle cx="452" cy="1042" r="8.500" /><path d="M458 1048L464 1054.500" /></g>
        <text x="480" y="1051" font-size="19.500" fill="#605e5c" textLength="61" lengthAdjust="spacingAndGlyphs">Search</text>
        <ellipse cx="694" cy="1046" rx="16" ry="12.500" fill="#e5a36d" /><ellipse cx="694" cy="1044" rx="15" ry="11.500" fill="#7c4a2a" /><ellipse cx="694" cy="1042" rx="5" ry="3" fill="#2d1710" /><g stroke-width="2" fill="none"><path d="M683 1042l2-2M688 1051l3 1M698 1035l2 1" stroke="#4ec3e0" /><path d="M703 1040l2 2M697 1051l2-1M686 1036l2-1" stroke="#e05a8a" /><path d="M691 1035l2 1M704 1048l1-2M684 1047l2 1" stroke="#e8d23c" /></g>
        <path d="M719 1038L739 1049" stroke="#e5a080" stroke-width="14" stroke-linecap="round" /><path d="M720 1037L738 1046" stroke="#98564a" stroke-width="11" stroke-linecap="round" />
        <rect x="772" y="1036" width="27" height="25" rx="2" fill="#2b2a29" /><rect x="781" y="1027" width="27" height="24" rx="2" fill="#fafafa" /><rect x="781" y="1036" width="18" height="15" fill="#bdbcbb" />
        <use href="#copilot" x="838" y="1027" />
        <circle cx="922" cy="1044" r="18" fill="url(#edge)" /><path d="M904 1044C905 1032 927 1032 928 1043C918 1037 913 1046 918 1053C922 1058 932 1057 937 1053C933 1061 926 1063 920 1062C910 1061 904 1053 904 1044Z" fill="#1464b4" /><path d="M919 1042C922 1038 929 1041 927 1047C926 1051 932 1052 937 1050C932 1056 918 1055 918 1047Z" fill="#f1ded3" />
        <path d="M970 1030Q970 1028 972 1028H981L985 1031H1004Q1006 1031 1006 1033V1059Q1006 1061 1004 1061H972Q970 1061 970 1059Z" fill="url(#fold)" /><path d="M970 1030Q970 1028 972 1028H981L985 1031L981 1034H970Z" fill="#d9940c" /><path d="M976 1061V1053Q976 1050 979 1050H997Q1000 1050 1000 1053V1061Z" fill="#1583d8" /><path d="M981 1055.500H995" stroke="#0a4f96" stroke-width="2" />
        <path d="M1046 1042L1058 1029L1072 1040V1056Q1072 1059 1069 1059H1046Z" fill="#2b9fe8" /><path d="M1058 1029L1072 1040L1056 1050L1050 1038Z" fill="#0c58b0" /><path d="M1046 1059L1072 1042V1056Q1072 1059 1069 1059Z" fill="#50d0f5" /><rect x="1036" y="1035" width="18" height="17" rx="2" fill="#0f6cd0" /><circle cx="1045" cy="1043.500" r="4.500" fill="none" stroke="#fff" stroke-width="2" />
        <rect x="1102" y="1026" width="36" height="36" fill="url(#asus)" /><path d="M1106 1053L1116 1035M1112 1053L1122 1035M1119 1053L1129 1036V1053" fill="none" stroke="#fff" stroke-width="2.600" />
        <rect x="1170" y="1028" width="31" height="24" rx="2" fill="#1283d4" /><rect x="1168" y="1050" width="35" height="3" fill="#0b5fa8" /><rect x="1176" y="1032" width="17" height="28" rx="2" fill="#3fc8f0" /><rect x="1176" y="1044" width="17" height="16" fill="#1479c8" />
        <use href="#copilot" transform="translate(1234 1028) scale(1 .8)" /><rect x="1244" y="1051" width="26" height="11" rx="1.500" fill="#111" /><text x="1257" y="1060" font-size="9" font-weight="700" fill="#fff" text-anchor="middle">M365</text>
        <path d="M1302 1026L1318 1034L1334 1026V1054L1318 1062L1302 1054ZM1309 1038V1049L1318 1054L1327 1049V1038L1318 1043Z" fill="#c5282f" fill-rule="evenodd" />
        <use href="#chrome" x="1384" y="1044" /><circle cx="1398" cy="1031" r="12" fill="#455a64" /><text x="1398" y="1036" font-size="13" text-anchor="middle" fill="#fff">N</text>
        <rect x="1422" y="1016" width="56" height="56" rx="5" fill="#f2f1f1" stroke="#d0cfce" /><rect x="1451" y="1026" width="12.500" height="36" rx="1.500" fill="#d18f0b" /><rect x="1444" y="1035" width="13" height="27" rx="1.500" fill="#e9b71c" /><rect x="1436.500" y="1044" width="13" height="18" rx="1.500" fill="#f7dc6a" /><rect x="1438" y="1068" width="24" height="4.500" rx="2.200" fill="#0f6fd0" />
        <use href="#chrome" x="1516" y="1044" /><circle cx="1530" cy="1031" r="12" fill="#512da8" /><text x="1530" y="1036" font-size="13" text-anchor="middle" fill="#fff">J</text>
        <g fill="#8a8684"><circle cx="988.500" cy="1070.500" r="4" /><circle cx="1318.500" cy="1070.500" r="4" /><circle cx="1384" cy="1070.500" r="4" /><circle cx="1516" cy="1070.500" r="4" /></g>
        <g fill="none" stroke="#252423" stroke-width="1.700"><path d="M1652 1048L1660 1040L1668 1048" /><path d="M1697 1042C1704 1034 1713 1034 1720 1042M1700.500 1045.500C1706 1040 1711 1040 1716.500 1045.500M1704 1049C1707 1046 1710 1046 1713 1049" /><circle cx="1708.500" cy="1051.500" r="1.500" fill="#252423" stroke="none" /><path d="M1733 1041H1736.500L1742 1036V1052L1736.500 1048H1733ZM1746 1040C1748 1042 1748 1046 1746 1048M1749 1037C1753 1041 1753 1048 1749 1051M1752 1034.500C1757 1040 1757 1049 1752 1053.500" /><rect x="1769" y="1037.500" width="20" height="13" rx="3" /></g>
        <rect x="1772" y="1040" width="14" height="8" rx="1" fill="#111" /><path d="M1791 1041V1047" stroke="#252423" stroke-width="2" />
        <text x="1890" y="1038" font-size="17" text-anchor="end" fill="#252423" textLength="74" lengthAdjust="spacingAndGlyphs">11:52 PM</text><text x="1890" y="1062" font-size="17" text-anchor="end" fill="#252423" textLength="73" lengthAdjust="spacingAndGlyphs">6/6/2025</text>
      </svg>
    </footer>
  </div>
</template>

<style>
body { margin: 0; overflow: hidden; }
</style>

<style scoped>
* { box-sizing: border-box; }
.app { width: 1920px; height: 1080px; display: flex; flex-direction: column; font-family: "Open Sans", "Noto Sans", sans-serif; color: #252423; background: #f3f2f1; white-space: nowrap; overflow: hidden; }
svg { display: block; flex: none; }
h1, h2, h3, ul { margin: 0; padding: 0; }
i, em { font-style: normal; }

.titlebar { height: 51px; flex: none; background: #3b3a38; display: flex; align-items: center; color: #fff; }
.quick { margin-left: 20px; }
.doc { margin-left: 10px; width: 355px; font-size: 17.500px; letter-spacing: -.13px; padding-top: 6px; }
.caret { margin-left: 10px; margin-top: 4px; }
.topsearch { margin: 2px 0 0 257px; width: 600px; height: 36px; background: #d4d4d2; border-radius: 4px; display: flex; align-items: center; padding-left: 26px; color: #1e5c4f; font-size: 20px; letter-spacing: -.2px; }
.topsearch span { margin-left: 17px; padding-top: 1px; }
.signin { margin-left: 214px; width: 54px; font-size: 17.500px; letter-spacing: 0; padding-top: 2px; }
.avatar { margin-left: 16px; }
.winbtns { margin: 4px 0 0 46px; }

.ribbon { height: 189px; flex: none; background: #fafafa; position: relative; z-index: 2; box-shadow: 0 2px 5px rgba(0, 0, 0, .22); display: flex; flex-direction: column; }
.tabs { height: 47px; display: flex; font-size: 20px; line-height: 49px; }
.tab { height: 47px; letter-spacing: -.25px; }
.tab.active { font-weight: 600; border-bottom: 5px solid #117865; letter-spacing: -.5px; }
.ctx { background: #fff; color: #117865; font-weight: 600; text-align: center; letter-spacing: -.5px; height: 47px; }
.format { margin-left: 23px; width: 113px; }
.drill { margin-left: 6px; width: 149px; letter-spacing: -.2px; }
.share { margin: 6px 9px 0 auto; width: 125px; height: 36px; border: 0; border-radius: 5px; background: #117865; color: #fff; font: 17px "Open Sans", sans-serif; display: flex; align-items: center; padding: 0 0 0 10px; }
.share span { width: 46px; margin: 0 5px 0 11px; letter-spacing: -.1px; }
.groups { flex: 1; display: flex; padding: 7px 0 3px; position: relative; }
.group { border-right: 1px solid #d2d0ce; display: flex; flex-direction: column; align-items: center; height: 132px; flex: none; }
.group.themes { width: 736px; }
.gallery { width: 710px; height: 93px; margin: 12px 2px 0 0; border: 1px solid #8a8886; background: #fff; display: flex; gap: 14px; align-items: center; padding: 0 0 1px 7px; }
.more { width: 24px; height: 91px; border-left: 1px solid #8a8886; margin-left: -7px; display: flex; align-items: center; justify-content: center; padding-top: 8px; background: #fafafa; }
.glabel { margin-top: auto; height: 19px; line-height: 19px; font-size: 14px; letter-spacing: -.15px; margin-bottom: -1px; }
.tool { display: flex; flex-direction: column; align-items: center; font-size: 18px; line-height: 24px; text-align: center; letter-spacing: -.4px; padding-top: 7px; }
.tool > svg { height: 46px; }
.tool > span { margin-top: 4px; }
.tool > span svg { display: inline-block; vertical-align: 2px; }
.tool.on { border: 1px solid #252423; background: #ebebeb; height: 108px; padding-top: 3px; margin-top: 4px; }
.tool.on > span { margin-top: 3px; }
.tool > svg.tall { height: 50px; margin-top: -3px; margin-bottom: -1px; }
.tool > svg.shift { margin-left: 6px; }
.tools { display: flex; align-self: flex-start; padding-left: 12px; height: 112px; }
.options { align-self: flex-start; padding: 9px 0 0 25px; display: flex; flex-direction: column; gap: 13px; font-size: 18px; letter-spacing: -.2px; }
.options label { height: 24px; display: flex; align-items: center; gap: 6px; }
.options i { width: 24px; height: 24px; border: 1px solid #605e5c; background: #fff; display: flex; align-items: center; justify-content: center; }
.collapse { position: absolute; right: 7px; top: 124px; }

.work { height: 732px; flex: none; display: flex; }
.rail { width: 61px; border-right: 1px solid #d2d0ce; flex: none; }
.center { width: 1317px; display: grid; grid-template: 679px 53px / 1269px 48px; flex: none; }
.canvas { position: relative; background: #ae90a6; overflow: hidden; border-right: 1px solid #d2d0ce; }
.pageframe { position: absolute; left: 38px; top: -4px; width: 1192px; height: 674px; background:
  repeating-linear-gradient(#5f5b5b 0 3px, transparent 3px 6px) left / 3px 100% no-repeat,
  repeating-linear-gradient(#5f5b5b 0 3px, transparent 3px 6px) right / 3px 100% no-repeat,
  repeating-linear-gradient(90deg, #5f5b5b 0 3px, transparent 3px 6px) bottom / 100% 3px no-repeat; }
.heading { position: absolute; left: 45px; top: 19px; font: 700 31px/36px "Liberation Serif", serif; color: #d64550; letter-spacing: -.05px; }
.textbox { position: absolute; left: 41px; top: 59px; width: 392px; height: 21px; border: 1px solid #2a6ebb; }
.visual { position: absolute; background: #000; border-radius: 14px; overflow: hidden; color: #d64550; border: 1px solid #1a0f14; }
.visual > svg { margin: -1px; }
.visual.red { border-color: #a43742; }
.visual.round { border-radius: 18px; }
.visual text { fill: #d64550; }
.visual text.green { fill: #1ef03c; }
.visual text.lime { fill: #5cf050; }
.din { font-family: Roboto, sans-serif; }
.t { font-size: 15.500px; font-weight: 700; }
.big { font-size: 50px; font-weight: 500; }
.slicer { display: flex; flex-direction: column; padding: 0 8px 0 16px; }
.shead { height: 25px; flex: none; display: flex; align-items: center; justify-content: space-between; padding: 10px 9px 0 0; font: 700 13px Roboto, sans-serif; line-height: 16px; letter-spacing: -.05px; }
.shead svg { margin-top: -2px; }
.sbody { height: 63px; overflow: hidden; display: flex; justify-content: space-between; }
.srow { display: flex; align-items: center; height: 27px; font-size: 15px; letter-spacing: -.25px; }
.tree .srow { height: 25.500px; }
.srow i { width: 15px; height: 15px; border: 1px solid #8a8886; margin-right: 7px; }
.srow svg { margin-right: 8px; margin-top: -4px; }
.sthumb { width: 8px; background: #8a8886; }
.selframe { position: absolute; left: 732px; top: 0; width: 230px; height: 98px; border: 1px solid #c8c6c4; }
.vtools { position: absolute; left: 844px; top: 99px; display: flex; gap: 6px; }
.vtools span { width: 35px; height: 34px; background: #fff; display: flex; align-items: center; justify-content: center; }
.reddot { position: absolute; left: 642px; top: 223px; width: 6px; height: 6px; border-radius: 50%; background: #e81123; }

.filters { background: #fff; display: flex; flex-direction: column; align-items: center; padding-top: 21px; }
.filters .ff { margin-top: 25px; margin-left: 5px; }
.filters span { writing-mode: vertical-rl; font-size: 20px; font-weight: 600; margin-top: 10px; letter-spacing: .3px; line-height: 24px; margin-right: 2px; }
.pagebar { grid-column: 1 / 3; display: flex; border-bottom: 1px solid #e1dfdd; }
.layouts { margin-left: 1px; }
.page { width: 112px; height: 53px; background: #fff; border-bottom: 6px solid #117865; border-left: 1px solid #a19f9d; font-size: 17.500px; font-weight: 600; text-align: center; line-height: 55px; letter-spacing: -.5px; }
.add { margin-left: 1px; width: 59px; height: 53px; background: #117865; display: flex; align-items: center; justify-content: center; padding-bottom: 2px; }

.vis { width: 271px; border-left: 1px solid #e1dfdd; border-right: 1px solid #e1dfdd; display: flex; flex-direction: column; flex: none; }
.phead { display: flex; justify-content: space-between; align-items: center; height: 30px; margin-top: 14px; padding: 0 11px 0 12px; flex: none; }
.vis .phead { padding-right: 10px; }
h2 { font-size: 23px; font-weight: 600; letter-spacing: -.5px; line-height: 30px; }
h3 { font-size: 17px; font-weight: 600; letter-spacing: -.4px; line-height: 24px; margin: 13px 0 0 12px; height: 24px; }
.modes { display: flex; margin-top: 5px; padding-left: 12px; align-items: center; height: 48px; }
.modes svg:nth-child(2) { margin-left: 59px; }
.modes svg:nth-child(3) { margin-left: 60px; }
.notch { margin-top: 6px; }
.icons { display: grid; grid-template-columns: repeat(6, 42px); grid-auto-rows: 42px; margin: 9px 0 0 9px; }
.ico { width: 42px; height: 42px; padding: 7px; }
.ico svg { overflow: visible; }
.ico.sel { box-shadow: inset 0 0 0 1px #252423; width: 36px; height: 36px; padding: 4px; margin: 3px; }
.dots { margin: 16px 0 0 19px; }
.wells { flex: 1; margin-top: 28px; border-top: 1px solid #e1dfdd; position: relative; font-size: 17px; letter-spacing: -.2px; border-bottom: 1px solid #e1dfdd; color: #323130; }
.field { height: 45px; line-height: 52px; padding-left: 18px; }
.well { width: 255px; height: 51px; margin-left: 6px; background: #fff; border: 1px dashed #b3b0ad; padding: 3px; }
.pill { height: 33px; border: 1px solid #b3b0ad; border-radius: 2px; background: #edebe9; display: flex; align-items: center; justify-content: space-between; padding: 0 6px 0 7px; letter-spacing: -.1px; }
.drillt { font-weight: 600; padding-left: 18px; height: 24px; line-height: 24px; margin-top: 17px; letter-spacing: -.2px; }
.trow { display: flex; justify-content: space-between; align-items: center; padding: 0 32px 0 18px; height: 24px; margin-top: 13px; letter-spacing: -.15px; }
.trow.kf { margin-top: 16px; }
.trow em { width: 48px; height: 24px; border-radius: 12px; font-size: 13px; display: flex; align-items: center; justify-content: space-between; padding: 0 6px; letter-spacing: -.3px; }
.off { background: #fff; border: 1px solid #605e5c; color: #605e5c; }
.onn { background: #117865; color: #fff; }
.trow i { width: 12px; height: 12px; border-radius: 50%; background: #605e5c; }
.onn i { background: #fff; }
.vscroll { position: absolute; right: 0; top: 3px; width: 9px; height: 165px; border-radius: 4px; background: #8a8886; }

.data { flex: 1; position: relative; border-bottom: 1px solid #e1dfdd; }
.dsearch { margin: 24px 0 0 7px; width: 257px; height: 36px; border: 1px solid #c8c6c4; border-bottom-color: #605e5c; border-radius: 5px; background: #fff; display: flex; align-items: center; padding-left: 17px; font-size: 20px; color: #605e5c; letter-spacing: -.3px; }
.dsearch span { margin-left: 10px; padding-top: 1px; }
ul { list-style: none; margin-top: 3px; }
li { height: 36px; display: flex; align-items: center; padding-left: 47px; font-size: 17px; letter-spacing: -.2px; }
li i { width: 18px; height: 18px; border: 1px solid #797775; border-radius: 3px; margin: 0 11px 0 10px; display: flex; flex: none; }
li i.checked { background: #117865; border-color: #117865; }
li span { margin-left: 8px; }
.dscroll { position: absolute; left: 253px; top: 394px; width: 12px; height: 326px; background: #8a8886; }

.status { height: 36px; flex: none; display: flex; align-items: center; border-bottom: 2px solid #111; font-size: 17.500px; letter-spacing: -.2px; }
.pcount { margin-left: 6px; width: 1595px; letter-spacing: -.1px; padding-top: 4px; }
.pct { margin: 0 27px 0 16px; width: 35px; color: #605e5c; letter-spacing: -.6px; }
.taskbar { height: 72px; flex: none; background: linear-gradient(90deg, #d9d9d9 0 28%, #e6e4dc 34%, #f1e0d5 40%, #f1dcd0 50%, #f1ded3 61%, #eae3dd 66%, #dadad9 73%, #d9d9d9); box-shadow: inset 0 2px #b5b3b1; }
</style>
